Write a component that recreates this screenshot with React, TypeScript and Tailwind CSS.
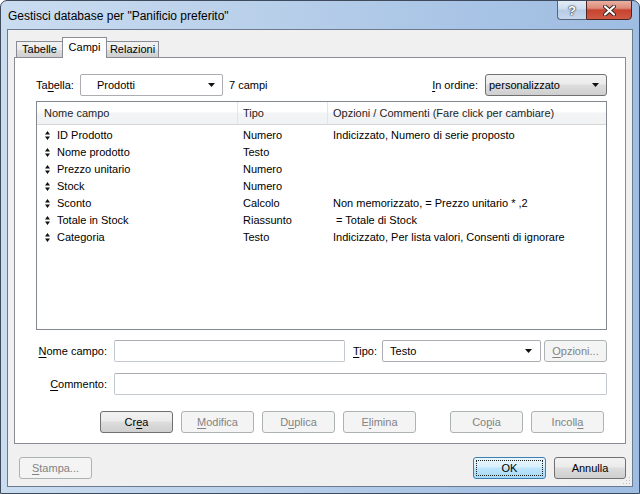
import React from "react";

const U = ({ children }: { children: React.ReactNode }) => (
  <span className="underline underline-offset-[2px] decoration-[1px]">{children}</span>
);

const SortIcon = () => (
  <svg width="5" height="9" viewBox="0 0 5 9" className="shrink-0">
    <path d="M2.5 0 L5 3.5 H0 Z M0 5.5 H5 L2.5 9 Z" fill="#111" />
  </svg>
);

const Arrow = () => (
  <svg width="7" height="4" viewBox="0 0 7 4" className="shrink-0">
    <path d="M0 0 H7 L3.5 4 Z" fill="#111" />
  </svg>
);

const rows: [string, string, string][] = [
  ["ID Prodotto", "Numero", "Indicizzato, Numero di serie proposto"],
  ["Nome prodotto", "Testo", ""],
  ["Prezzo unitario", "Numero", ""],
  ["Stock", "Numero", ""],
  ["Sconto", "Calcolo", "Non memorizzato, = Prezzo unitario * ,2"],
  ["Totale in Stock", "Riassunto", "\u00a0= Totale di Stock"],
  ["Categoria", "Testo", "Indicizzato, Per lista valori, Consenti di ignorare"],
];

function Btn({
  children,
  disabled,
  w = "w-[73px]",
}: {
  children: React.ReactNode;
  disabled?: boolean;
  w?: string;
}) {
  if (disabled) {
    return (
      <div
        className={`${w} h-[22px] shrink-0 rounded-[3px] border border-[#adb2b5] bg-[#f4f4f4] text-[#838383] flex items-center justify-center whitespace-nowrap`}
      >
        {children}
      </div>
    );
  }
  return (
    <div
      className={`${w} h-[22px] shrink-0 rounded-[3px] border border-[#707070] bg-[linear-gradient(to_bottom,#f2f2f2_0%,#ebebeb_45%,#dddddd_50%,#cfcfcf_100%)] text-black flex items-center justify-center whitespace-nowrap`}
    >
      {children}
    </div>
  );
}

export default function App() {
  return (
    <div className="w-[640px] h-[494px] relative overflow-hidden rounded-t-[7px] border border-[#3f4b5c] bg-[linear-gradient(to_right,#cadcf0_0%,#b9d0ea_40%,#a7c3e5_75%,#9fbde2_100%)] font-['Liberation_Sans',Arial,sans-serif] text-[11px] leading-none text-black flex flex-col">
      {/* title bar */}
      <div className="h-[28px] shrink-0 flex items-center pl-[7px] pt-[1px] text-[12px] whitespace-nowrap">
        Gestisci database per "Panificio preferito"
      </div>
      {/* caption buttons */}
      <div className="absolute top-[-1px] right-[7px] flex">
        <div className="w-[29px] h-[20px] rounded-bl-[4px] border border-[#56657a] border-r-0 bg-[linear-gradient(to_bottom,#e3ecf7_0%,#cddcee_45%,#b6cbe4_50%,#c6d8ee_100%)] flex items-center justify-center">
          <span className="text-white font-bold text-[13px] [text-shadow:0_0_1px_#2a3a50,0_0_1px_#2a3a50,0_0_2px_#2a3a50]">
            ?
          </span>
        </div>
        <div className="w-[46px] h-[20px] rounded-br-[4px] border border-[#4b2520] bg-[linear-gradient(to_bottom,#eab0a3_0%,#dc8a78_40%,#c7432f_50%,#cf5a44_100%)] flex items-center justify-center">
          <svg width="13" height="11" viewBox="0 0 13 11">
            <path d="M2 1.5 L11 9.5 M11 1.5 L2 9.5" stroke="#3a2220" strokeWidth="4" strokeLinecap="round" />
            <path d="M2 1.5 L11 9.5 M11 1.5 L2 9.5" stroke="#fff" strokeWidth="2.2" strokeLinecap="round" />
          </svg>
        </div>
      </div>

      {/* client area */}
      <div className="mx-[6px] h-[458px] shrink-0 border border-[#6b7a8f] bg-[#f0f0f0] flex flex-col px-[6px] pt-[7px] pb-[7px] relative">
        {/* tabs */}
        <div className="h-[21px] -mb-[1px] flex items-end pl-[2px] relative z-10">
          <div className="w-[46px] h-[16px] mb-[1px] border border-[#898c95] border-b-0 border-r-0 bg-[linear-gradient(to_bottom,#f2f2f2_0%,#ebebeb_50%,#dddddd_51%,#cfcfcf_100%)] flex items-center justify-center">
            Tabelle
          </div>
          <div className="w-[45px] h-[21px] border border-[#898c95] border-b-0 bg-white flex items-start justify-center pt-[4px]">
            Campi
          </div>
          <div className="w-[52px] h-[16px] mb-[1px] border border-[#898c95] border-b-0 border-l-0 bg-[linear-gradient(to_bottom,#f2f2f2_0%,#ebebeb_50%,#dddddd_51%,#cfcfcf_100%)] flex items-center justify-center">
            Relazioni
          </div>
        </div>

        {/* panel */}
        <div className="h-[387px] shrink-0 border border-[#898c95] bg-white flex flex-col pt-[16px] pb-[10px] pl-[21px] pr-[18px]">
          {/* row 1 */}
          <div className="h-[22px] flex items-center whitespace-nowrap">
            <span className="w-[44px]">
              Ta<U>b</U>ella:
            </span>
            <div className="w-[143px] h-[22px] border border-[#abadb3] rounded-[2px] bg-white flex items-center pl-[16px] pr-[7px]">
              <span className="flex-1">Prodotti</span>
              <Arrow />
            </div>
            <span className="ml-[6px]">7 campi</span>
            <span className="ml-auto mr-[7px]">
              <U>I</U>n ordine:
            </span>
            <div className="w-[122px] h-[22px] border border-[#707070] rounded-[3px] bg-[linear-gradient(to_bottom,#f2f2f2_0%,#ebebeb_45%,#dddddd_50%,#cfcfcf_100%)] flex items-center pl-[3px] pr-[7px]">
              <span className="flex-1">personalizzato</span>
              <Arrow />
            </div>
          </div>

          {/* list */}
          <div className="mt-[5px] h-[229px] shrink-0 border border-[#828790] bg-white flex flex-col whitespace-nowrap">
            <div className="h-[23px] shrink-0 flex border-b border-[#d5d5d5] bg-[linear-gradient(to_bottom,#ffffff_0%,#ffffff_45%,#f3f4f6_50%,#f1f2f4_100%)] text-[#1e1e1e]">
              <div className="w-[201px] border-r border-[#e3e5e8] flex items-center pl-[7px]">Nome campo</div>
              <div className="w-[90px] border-r border-[#e3e5e8] flex items-center pl-[5px]">Tipo</div>
              <div className="flex-1 flex items-center pl-[5px]">Opzioni / Commenti (Fare click per cambiare)</div>
            </div>
            <div className="pt-[2px] flex flex-col">
              {rows.map(([n, t, o]) => (
                <div key={n} className="h-[17px] flex items-center">
                  <div className="w-[201px] flex items-center pl-[8px] gap-[7px]">
                    <SortIcon />
                    <span>{n}</span>
                  </div>
                  <div className="w-[90px] pl-[5px]">{t}</div>
                  <div className="flex-1 pl-[5px]">{o}</div>
                </div>
              ))}
            </div>
          </div>

          {/* nome campo row */}
          <div className="mt-[10px] h-[22px] flex items-center whitespace-nowrap">
            <span className="w-[71px] text-right">
              <U>N</U>ome campo:
            </span>
            <div className="ml-[7px] w-[231px] h-[22px] border border-[#c5c9d0] border-t-[#abadb3] rounded-[2px] bg-white" />
            <span className="ml-[8px]">
              <U>T</U>ipo:
            </span>
            <div className="ml-[5px] w-[159px] h-[22px] border border-[#abadb3] rounded-[2px] bg-white flex items-center pl-[7px] pr-[8px]">
              <span className="flex-1">Testo</span>
              <Arrow />
            </div>
            <div className="ml-auto">
              <Btn disabled w="w-[63px]">
                <U>O</U>pzioni...
              </Btn>
            </div>
          </div>

          {/* commento row */}
          <div className="mt-[11px] h-[22px] flex items-center whitespace-nowrap">
            <span className="w-[71px] text-right">
              <U>C</U>ommento:
            </span>
            <div className="ml-[7px] flex-1 h-[22px] border border-[#c5c9d0] border-t-[#abadb3] rounded-[2px] bg-white" />
          </div>

          {/* buttons */}
          <div className="mt-[16px] h-[22px] flex items-center pl-[64px]">
            <Btn>
              Cr<U>e</U>a
            </Btn>
            <div className="ml-[8px]">
              <Btn disabled>
                <U>M</U>odifica
              </Btn>
            </div>
            <div className="ml-[8px]">
              <Btn disabled>
                D<U>u</U>plica
              </Btn>
            </div>
            <div className="ml-[8px]">
              <Btn disabled>
                E<U>l</U>imina
              </Btn>
            </div>
            <div className="ml-[34px]">
              <Btn disabled>
                Co<U>p</U>ia
              </Btn>
            </div>
            <div className="ml-[8px]">
              <Btn disabled>
                Incoll<U>a</U>
              </Btn>
            </div>
          </div>
        </div>

        {/* bottom row */}
        <div className="mt-[13px] h-[22px] flex items-center">
          <div className="ml-[5px]">
            <Btn disabled>
              <U>S</U>tampa...
            </Btn>
          </div>
          <div className="ml-auto w-[73px] h-[22px] rounded-[3px] border border-[#3c7fb1] bg-[linear-gradient(to_bottom,#eaf6fd_0%,#d9f0fc_45%,#bee6fd_50%,#a7d9f5_100%)] p-[2px]">
            <div className="w-full h-full border border-dotted border-[#222] flex items-center justify-center">OK</div>
          </div>
          <div className="ml-[8px]">
            <Btn w="w-[72px]">Annulla</Btn>
          </div>
        </div>
        {/* grip */}
        <svg className="absolute right-[1px] bottom-[1px]" width="9" height="9" viewBox="0 0 9 9">
          <g fill="#b8bcc4">
            <rect x="7" y="1" width="1" height="1" />
            <rect x="4" y="4" width="1" height="1" />
            <rect x="7" y="4" width="1" height="1" />
            <rect x="1" y="7" width="1" height="1" />
            <rect x="4" y="7" width="1" height="1" />
            <rect x="7" y="7" width="1" height="1" />
          </g>
        </svg>
      </div>
    </div>
  );
}
